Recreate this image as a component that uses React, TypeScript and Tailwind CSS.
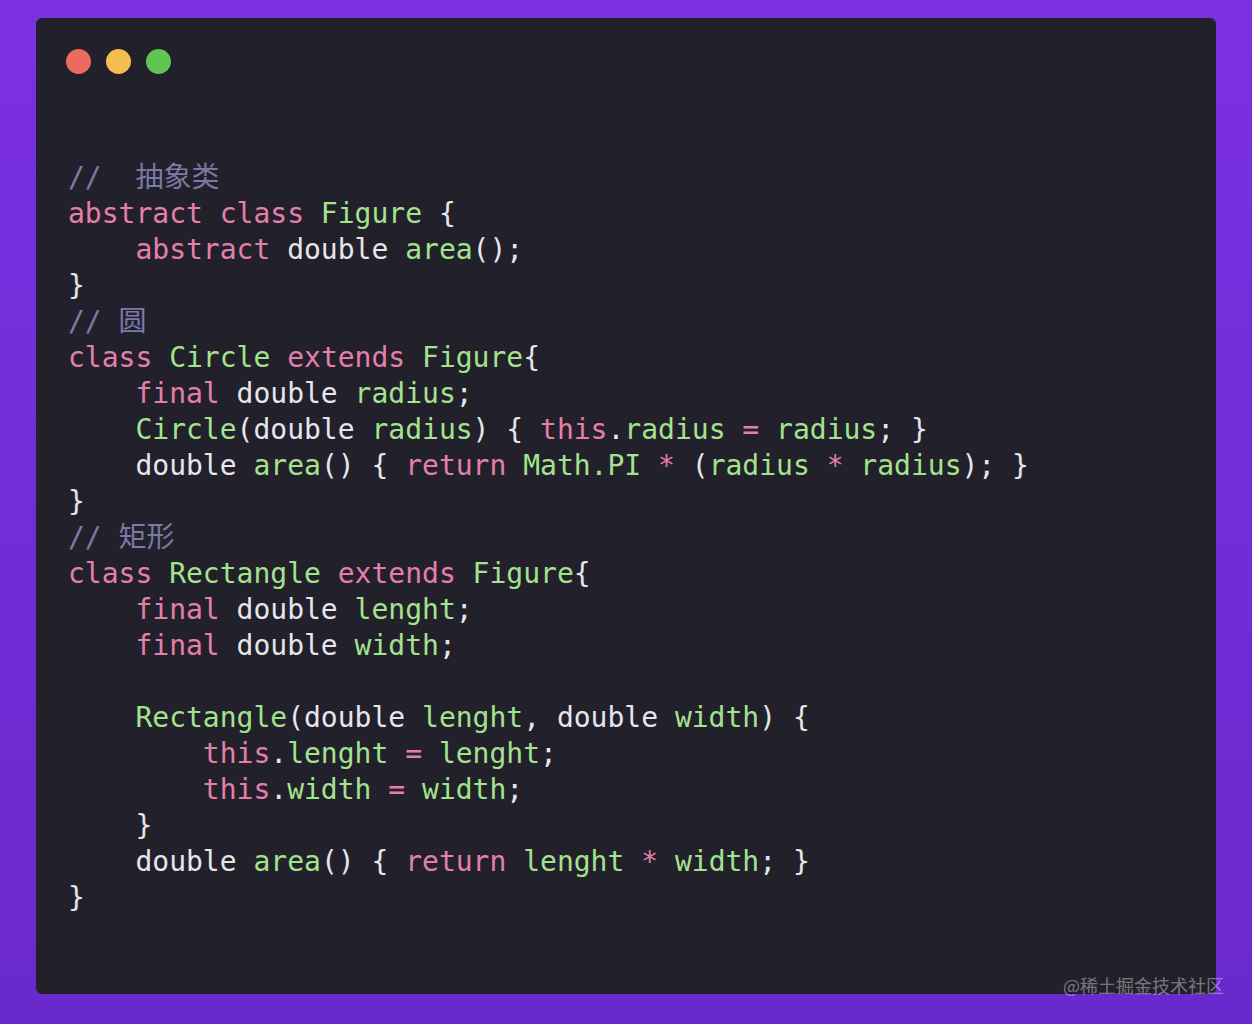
type Tok = [string, string];

const P = "text-[#e47fa9]";
const G = "text-[#a4e38d]";
const W = "text-[#e6e6ea]";
const C = "text-[#7c79a6]";

const lines: Tok[][] = [
  [["//  抽象类", C]],
  [["abstract class", P], [" Figure", G], [" {", W]],
  [["    abstract", P], [" double", W], [" area", G], ["();", W]],
  [["}", W]],
  [["// 圆", C]],
  [["class", P], [" Circle", G], [" extends", P], [" Figure", G], ["{", W]],
  [["    final", P], [" double", W], [" radius", G], [";", W]],
  [
    ["    Circle", G], ["(double", W], [" radius", G], [") { ", W], ["this", P], [".", W],
    ["radius", G], [" = ", P], ["radius", G], ["; }", W],
  ],
  [
    ["    double", W], [" area", G], ["() { ", W], ["return", P], [" Math.PI", G], [" * ", P],
    ["(", W], ["radius", G], [" * ", P], ["radius", G], ["); }", W],
  ],
  [["}", W]],
  [["// 矩形", C]],
  [["class", P], [" Rectangle", G], [" extends", P], [" Figure", G], ["{", W]],
  [["    final", P], [" double", W], [" lenght", G], [";", W]],
  [["    final", P], [" double", W], [" width", G], [";", W]],
  [],
  [["    Rectangle", G], ["(double", W], [" lenght", G], [", double", W], [" width", G], [") {", W]],
  [["        this", P], [".", W], ["lenght", G], [" = ", P], ["lenght", G], [";", W]],
  [["        this", P], [".", W], ["width", G], [" = ", P], ["width", G], [";", W]],
  [["    }", W]],
  [
    ["    double", W], [" area", G], ["() { ", W], ["return", P], [" lenght", G], [" * ", P],
    ["width", G], ["; }", W],
  ],
  [["}", W]],
];

export default function App() {
  return (
    <div className="relative w-[1252px] h-[1024px] overflow-hidden bg-gradient-to-b from-[#7b30e2] to-[#6a29cc] pt-[18px] pl-[36px]">
      {/* window */}
      <div className="w-[1180px] h-[976px] rounded-md bg-[#22212b]">
        {/* traffic lights */}
        <div className="flex gap-[15px] pt-[31px] pl-[30px]">
          <div className="w-[25px] h-[25px] rounded-full bg-[#ec6a5e]"></div>
          <div className="w-[25px] h-[25px] rounded-full bg-[#f4bf4f]"></div>
          <div className="w-[25px] h-[25px] rounded-full bg-[#61c554]"></div>
        </div>

        {/* code */}
        <div
          className="mt-[86px] pl-[32px] text-[28px] leading-[36px] whitespace-pre"
          style={{ fontFamily: '"DejaVu Sans Mono", "Noto Sans CJK SC", monospace' }}
        >
          {lines.map((line, i) => (
            <div key={i} className="h-[36px]">
              {line.map(([text, cls], j) => (
                <span key={j} className={cls}>
                  {text}
                </span>
              ))}
            </div>
          ))}
        </div>
      </div>

      {/* watermark */}
      <div
        className="absolute right-[28px] bottom-[30px] text-[18px] leading-none text-[#ffffff]/40"
        style={{ fontFamily: '"Noto Sans CJK SC", sans-serif' }}
      >
        @稀土掘金技术社区
      </div>
    </div>
  );
}
